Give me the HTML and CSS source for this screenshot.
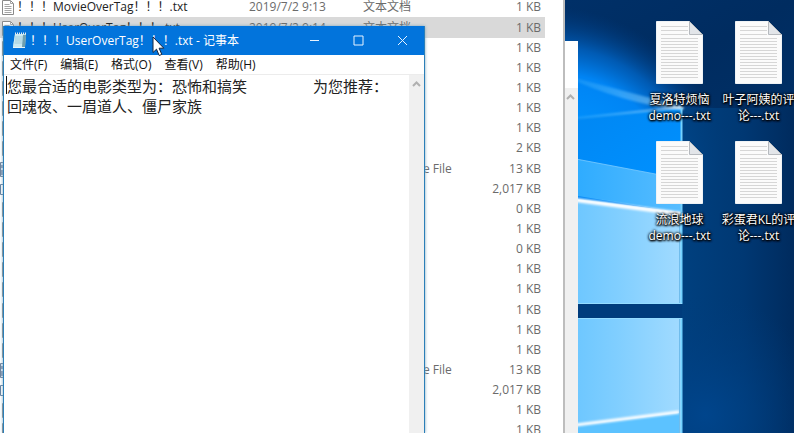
FILE: index.html
```html
<!DOCTYPE html>
<html lang="zh-CN">
<head>
<meta charset="utf-8">
<title>桌面</title>
<link rel="stylesheet" href="styles.css">
</head>
<body>
<main class="desktop">
  <svg class="wallpaper" viewBox="0 0 794 433" preserveAspectRatio="xMinYMin slice" aria-hidden="true">
    <defs>
      <radialGradient id="glow" gradientUnits="userSpaceOnUse" cx="0" cy="0" r="1" gradientTransform="translate(585 145) rotate(35) scale(165 125)">
        <stop offset="0" stop-color="#0093ff"/>
        <stop offset=".5" stop-color="#0084f4"/>
        <stop offset=".7" stop-color="#0066c8" stop-opacity=".8"/>
        <stop offset="1" stop-color="#003c82" stop-opacity="0"/>
      </radialGradient>
      <linearGradient id="night" x1="0" y1="0" x2="1" y2="1">
        <stop offset="0" stop-color="#003a7c"/>
        <stop offset=".5" stop-color="#002c60"/>
        <stop offset="1" stop-color="#003a78"/>
      </linearGradient>
      <linearGradient id="side" x1="0" y1="0" x2="1" y2="0">
        <stop offset="0" stop-color="#00407f"/>
        <stop offset=".55" stop-color="#003873"/>
        <stop offset="1" stop-color="#002b5e"/>
      </linearGradient>
      <radialGradient id="low" gradientUnits="userSpaceOnUse" cx="705" cy="415" r="120">
        <stop offset="0" stop-color="#00458c"/>
        <stop offset="1" stop-color="#003b7a" stop-opacity="0"/>
      </radialGradient>
      <linearGradient id="paneTop" x1="0" y1="0" x2="1" y2="1">
        <stop offset="0" stop-color="#0086f2"/>
        <stop offset="1" stop-color="#0091ff"/>
      </linearGradient>
      <linearGradient id="paneMid" x1="0" y1="0" x2="1" y2="0">
        <stop offset="0" stop-color="#28a9ff"/>
        <stop offset="1" stop-color="#58bdff"/>
      </linearGradient>
      <linearGradient id="pane" x1="0" y1="0" x2="1" y2="0">
        <stop offset="0" stop-color="#66c4ff"/>
        <stop offset=".5" stop-color="#82cfff"/>
        <stop offset="1" stop-color="#a2dbff"/>
      </linearGradient>
      <linearGradient id="ray" x1="0" y1="0" x2="1" y2="0">
        <stop offset="0" stop-color="#42b9ff" stop-opacity=".25"/>
        <stop offset=".75" stop-color="#9fdcff" stop-opacity=".65"/>
        <stop offset="1" stop-color="#e9f8ff"/>
      </linearGradient>
      <filter id="soft" x="-20%" y="-20%" width="140%" height="140%"><feGaussianBlur stdDeviation="1"/></filter>
    </defs>
    <rect width="794" height="433" fill="url(#night)"/>
    <path d="M682 108h112v325H682z" fill="url(#side)"/>
    <rect x="560" y="0" width="234" height="230" fill="url(#glow)"/>
    <path d="M682 180h112v60H682z" fill="url(#side)"/>
    <path d="M682 108h112v80H682z" fill="url(#side)" opacity=".9"/>
    <path d="M682 290h112v143H682z" fill="url(#low)"/>
    <path d="M560 120l122-12v70l-122-20z" fill="url(#paneTop)"/>
    <path d="M560 74l124 33-1 3q-60-6-123-36z" fill="url(#ray)" filter="url(#soft)" opacity=".75"/>
    <path d="M560 120l122-13" fill="none" stroke="url(#ray)" stroke-width="2" filter="url(#soft)"/>
    <path d="M560 156l122 23v34l-122-20z" fill="url(#paneMid)"/>
    <path d="M560 197l122 15v92H560z" fill="url(#pane)"/>
    <path d="M560 156l122 23" fill="none" stroke="#7bcbff" stroke-width="1" opacity=".8"/>
    <path d="M560 198l122 16" fill="none" stroke="#fff" stroke-width="4" filter="url(#soft)"/>
    <path d="M560 304h122v14H560z" fill="#003c7c"/>
    <path d="M560 318h122v115H560z" fill="url(#pane)"/>
    <path d="M560 428l119-15v20H560z" fill="#5cc2ff"/>
    <path d="M560 427l119-15" fill="none" stroke="#fff" stroke-width="3" filter="url(#soft)"/>
    <path d="M681.500 108v196M681.500 318v115" fill="none" stroke="#74d2ff" stroke-width="2"/>
    <path d="M679.500 318v115M679.500 220v84" fill="none" stroke="#50a8df" stroke-width="1" opacity=".6"/>
    <path d="M560 303.500h122M560 318.500h122" fill="none" stroke="#94dcff"/>
  </svg>

  <div class="shortcuts">
    <a class="shortcut" href="#"><svg class="paper" viewBox="0 0 47 63"><use href="#sheet"/></svg><span>夏洛特烦恼<br>demo---.txt</span></a>
    <a class="shortcut" href="#"><svg class="paper" viewBox="0 0 47 63"><use href="#sheet"/></svg><span>叶子阿姨的评<br>论---.txt</span></a>
    <a class="shortcut" href="#"><svg class="paper" viewBox="0 0 47 63"><use href="#sheet"/></svg><span>流浪地球<br>demo---.txt</span></a>
    <a class="shortcut" href="#"><svg class="paper" viewBox="0 0 47 63"><use href="#sheet"/></svg><span>彩蛋君KL的评<br>论---.txt</span></a>
  </div>

  <section class="window back-window">
    <div class="scrollbar"><svg class="chevron" viewBox="0 0 9 6"><path d="M1 5l3.500-3.500L8 5"/></svg></div>
  </section>

  <section class="window explorer">
    <table class="files">
      <colgroup><col class="c-name"><col class="c-date"><col class="c-type"><col></colgroup>
      <tbody>
        <tr><td class="name"><svg class="doc" viewBox="0 0 12 15"><use href="#doc"/></svg>！！！MovieOverTag！！！.txt</td><td>2019/7/2 9:13</td><td>文本文档</td><td class="size">1 KB</td></tr>
        <tr class="selected"><td class="name"><svg class="doc" viewBox="0 0 12 15"><use href="#doc"/></svg>！！！UserOverTag！！！.txt</td><td>2019/7/2 9:14</td><td>文本文档</td><td class="size">1 KB</td></tr>
        <tr><td class="name"><svg class="doc" viewBox="0 0 12 15"><use href="#doc"/></svg></td><td></td><td></td><td class="size">1 KB</td></tr>
        <tr><td class="name"><svg class="doc" viewBox="0 0 12 15"><use href="#doc"/></svg></td><td></td><td></td><td class="size">1 KB</td></tr>
        <tr><td class="name"><svg class="doc" viewBox="0 0 12 15"><use href="#doc"/></svg></td><td></td><td></td><td class="size">1 KB</td></tr>
        <tr><td class="name"><svg class="doc" viewBox="0 0 12 15"><use href="#doc"/></svg></td><td></td><td></td><td class="size">1 KB</td></tr>
        <tr><td class="name"><svg class="doc" viewBox="0 0 12 15"><use href="#doc"/></svg></td><td></td><td></td><td class="size">1 KB</td></tr>
        <tr><td class="name"><svg class="doc" viewBox="0 0 12 15"><use href="#doc"/></svg></td><td></td><td></td><td class="size">2 KB</td></tr>
        <tr><td class="name"><svg class="app" viewBox="0 0 14 15"><use href="#app"/></svg></td><td></td><td class="tail">e File</td><td class="size">13 KB</td></tr>
        <tr><td class="name"><svg class="app" viewBox="0 0 14 15"><use href="#box"/></svg></td><td></td><td></td><td class="size">2,017 KB</td></tr>
        <tr><td class="name"><svg class="doc" viewBox="0 0 12 15"><use href="#doc"/></svg></td><td></td><td></td><td class="size">0 KB</td></tr>
        <tr><td class="name"><svg class="doc" viewBox="0 0 12 15"><use href="#doc"/></svg></td><td></td><td></td><td class="size">1 KB</td></tr>
        <tr><td class="name"><svg class="doc" viewBox="0 0 12 15"><use href="#doc"/></svg></td><td></td><td></td><td class="size">0 KB</td></tr>
        <tr><td class="name"><svg class="doc" viewBox="0 0 12 15"><use href="#doc"/></svg></td><td></td><td></td><td class="size">1 KB</td></tr>
        <tr><td class="name"><svg class="doc" viewBox="0 0 12 15"><use href="#doc"/></svg></td><td></td><td></td><td class="size">1 KB</td></tr>
        <tr><td class="name"><svg class="doc" viewBox="0 0 12 15"><use href="#doc"/></svg></td><td></td><td></td><td class="size">1 KB</td></tr>
        <tr><td class="name"><svg class="doc" viewBox="0 0 12 15"><use href="#doc"/></svg></td><td></td><td></td><td class="size">1 KB</td></tr>
        <tr><td class="name"><svg class="doc" viewBox="0 0 12 15"><use href="#doc"/></svg></td><td></td><td></td><td class="size">1 KB</td></tr>
        <tr><td class="name"><svg class="app" viewBox="0 0 14 15"><use href="#app"/></svg></td><td></td><td class="tail">e File</td><td class="size">13 KB</td></tr>
        <tr><td class="name"><svg class="app" viewBox="0 0 14 15"><use href="#box"/></svg></td><td></td><td></td><td class="size">2,017 KB</td></tr>
        <tr><td class="name"><svg class="doc" viewBox="0 0 12 15"><use href="#doc"/></svg></td><td></td><td></td><td class="size">1 KB</td></tr>
        <tr><td class="name"><svg class="doc" viewBox="0 0 12 15"><use href="#doc"/></svg></td><td></td><td></td><td class="size">1 KB</td></tr>
      </tbody>
    </table>
  </section>

  <section class="window notepad">
    <header class="titlebar">
      <svg class="note" viewBox="0 0 15 17" aria-hidden="true">
        <path d="M3 2h11l-1 13H1z" fill="#a9d7e6"/>
        <path d="M3 2h8l-1 13H1z" fill="#c9e9f2"/>
        <path d="M11 3h3l-1 12h-3z" fill="#6f9fae"/>
        <path d="M3 5h8M3 7h7.500M3 9h7M2.500 11h7.500" stroke="#8fc2d3" stroke-width=".7"/>
        <path d="M3 1.500h11" stroke="#e9eef0" stroke-width="2" stroke-dasharray="1 1"/>
        <path d="M1 15.500h12" stroke="#e8f4f8"/>
      </svg>
      <h1 class="caption">！！！UserOverTag！！！.txt - 记事本</h1>
      <button class="control" aria-label="最小化"><svg viewBox="0 0 11 11"><path d="M1 5.500h9"/></svg></button>
      <button class="control" aria-label="最大化"><svg viewBox="0 0 11 11"><path d="M1 1h9v9H1z"/></svg></button>
      <button class="control" aria-label="关闭"><svg viewBox="0 0 11 11"><path d="M1 1l9 9M10 1l-9 9"/></svg></button>
    </header>
    <nav class="menubar">
      <button>文件(F)</button><button>编辑(E)</button><button>格式(O)</button><button>查看(V)</button><button>帮助(H)</button>
    </nav>
    <div class="editor">
      <textarea aria-label="文本" spellcheck="false">您最合适的电影类型为：恐怖和搞笑&#9;为您推荐：
回魂夜、一眉道人、僵尸家族</textarea>
      <i class="caret"></i>
      <div class="scrollbar"><svg class="chevron" viewBox="0 0 9 6"><path d="M1 5l3.500-3.500L8 5"/></svg></div>
    </div>
  </section>

  <svg class="pointer" viewBox="0 0 13 21" aria-hidden="true"><path d="M1 1v15.500l3.500-3.300 2.700 6.300 2.600-1.100-2.700-6.200h4.700z" fill="#fff" stroke="#16243c" stroke-width="1"/></svg>
</main>

<svg class="symbols" aria-hidden="true">
  <symbol id="sheet" viewBox="0 0 47 63">
    <path d="M.5.5h33l13 13v49H.5z" fill="#fbfbfb" stroke="#eef2f5"/>
    <path d="M5 5.500h27M5 9.500h27M5 13.500h27M5 17.500h37M5 20.500h37M5 23.500h37M5 26.500h37M5 29.500h37M5 32.500h37M5 35.500h37M5 38.500h37M5 41.500h37M5 44.500h37M5 47.500h37M5 50.500h37M5 53.500h37M5 56.500h37" stroke="#d6d6d6"/>
    <path d="M33.500.5v13h13z" fill="#e2e5e9" stroke="#b5b9be"/>
  </symbol>
  <symbol id="doc" viewBox="0 0 12 15">
    <path d="M.5.500h8l3 3v11H.5z" fill="#fff" stroke="#8a8a8a"/>
    <path d="M8.500.500v3h3M2.500 4.500h5M2.500 6.500h7M2.500 8.500h7M2.500 10.500h7M2.500 12.500h7" fill="none" stroke="#a5a5a5"/>
  </symbol>
  <symbol id="app" viewBox="0 0 14 15">
    <path d="M.5.5h13v14H.5z" fill="#dce9f5" stroke="#70839c"/>
    <path d="M2 3v3M2 8v5" stroke="#3b4f72"/>
  </symbol>
  <symbol id="box" viewBox="0 0 14 15">
    <path d="M.5 2.500h13v10H.5z" fill="#fff" stroke="#66809f"/>
  </symbol>
</svg>
</body>
</html>
```
FILE: styles.css
```css
* { box-sizing: border-box; }

body {
  margin: 0;
  font: 12px/20px "Open Sans", "Noto Sans CJK SC", sans-serif;
  color: #111;
}

button {
  border: 0;
  padding: 0;
  background: none;
  color: inherit;
  font: inherit;
}

svg { display: block; }

.symbols {
  position: absolute;
  width: 0;
  height: 0;
}

.desktop {
  position: relative;
  height: 100vh;
  overflow: hidden;
  background: #00386f;
}

.wallpaper {
  width: 100%;
  height: 100%;
}

/* Desktop shortcuts */
.shortcuts {
  position: absolute;
  top: 21px;
  left: 640px;
  display: grid;
  grid-template-columns: repeat(2, 79px);
  grid-auto-rows: 120px;
}

.shortcut {
  display: flex;
  flex-direction: column;
  align-items: center;
  gap: 8px;
  color: #fff;
  line-height: 16px;
  text-align: center;
  text-decoration: none;
  white-space: nowrap;
  text-shadow: 0 1px 2px #000, 1px 1px 2px #000, 0 0 3px #000, 0 0 3px #000;
}

.paper {
  width: 47px;
  height: 63px;
}

/* Windows */
.window {
  position: absolute;
  background: #fff;
  overflow: hidden;
}

.scrollbar {
  flex: none;
  width: 15px;
  background: #f0f0f0;
}

.chevron {
  width: 9px;
  height: 6px;
  margin: 6px 3px;
  fill: none;
  stroke: #b0b0b0;
  stroke-width: 2;
}

.back-window {
  top: 41px;
  bottom: 0;
  left: 500px;
  width: 78px;
  padding-top: 47px;
  display: flex;
  justify-content: flex-end;
}

.explorer {
  top: 0;
  bottom: 0;
  left: 0;
  width: 565px;
  border-right: 2px solid #bdbdbd;
}

.files {
  width: 545px;
  margin-top: -3px;
  border-collapse: collapse;
  table-layout: fixed;
  color: #6b6b6b;
}

.c-name { width: 249px; }
.c-date { width: 114px; }
.c-type { width: 104px; }

.files tr { height: 20px; }
.files tr:nth-child(7n + 2) { height: 21px; }
.files .selected { background: #d9d9d9; }

.files td {
  padding: 0;
  line-height: 20px;
  white-space: nowrap;
}

.files .name { color: #222; }
.files .tail { padding-left: 60px; }

.files .size {
  padding-right: 4px;
  text-align: right;
}

.doc, .app {
  display: inline-block;
  height: 15px;
  vertical-align: middle;
}

.doc {
  width: 12px;
  margin: 0 3px 0 2px;
}

.app { width: 14px; }

/* Notepad */
.notepad {
  top: 26px;
  bottom: 0;
  left: 3px;
  width: 422px;
  display: flex;
  flex-direction: column;
  border: solid #2b7fb8;
  border-width: 0 1px;
  box-shadow: 0 0 3px #7ba5bd;
}

.titlebar {
  flex: none;
  height: 29px;
  padding: 0 1px 0 8px;
  display: flex;
  align-items: center;
  gap: 3px;
  background: #0274dc;
  color: #fff;
}

.note {
  width: 15px;
  height: 17px;
}

.caption {
  flex: 1;
  margin: 0;
  font-size: 12px;
  font-weight: 400;
  white-space: nowrap;
}

.control {
  width: 41px;
  height: 29px;
  display: grid;
  place-items: center;
}

.control svg {
  width: 11px;
  height: 11px;
  fill: none;
  stroke: #e8f3ff;
}

.menubar {
  flex: none;
  height: 20px;
  padding-left: 6px;
  display: flex;
  gap: 13px;
  border-bottom: 1px solid #ececec;
}

.editor {
  position: relative;
  flex: 1;
  display: flex;
}

.editor textarea {
  flex: 1;
  margin: 0;
  padding: 1px 0 0 3px;
  border: 0;
  outline: 0;
  resize: none;
  overflow: hidden;
  background: #fff;
  color: #222;
  font: 15px/20px "Noto Sans CJK SC", sans-serif;
  white-space: pre;
  tab-size: 306px;
}

.caret {
  position: absolute;
  top: 1px;
  left: 2px;
  width: 1px;
  height: 18px;
  background: #111;
}

.pointer {
  position: absolute;
  top: 36px;
  left: 152px;
  width: 13px;
  height: 21px;
}
```
